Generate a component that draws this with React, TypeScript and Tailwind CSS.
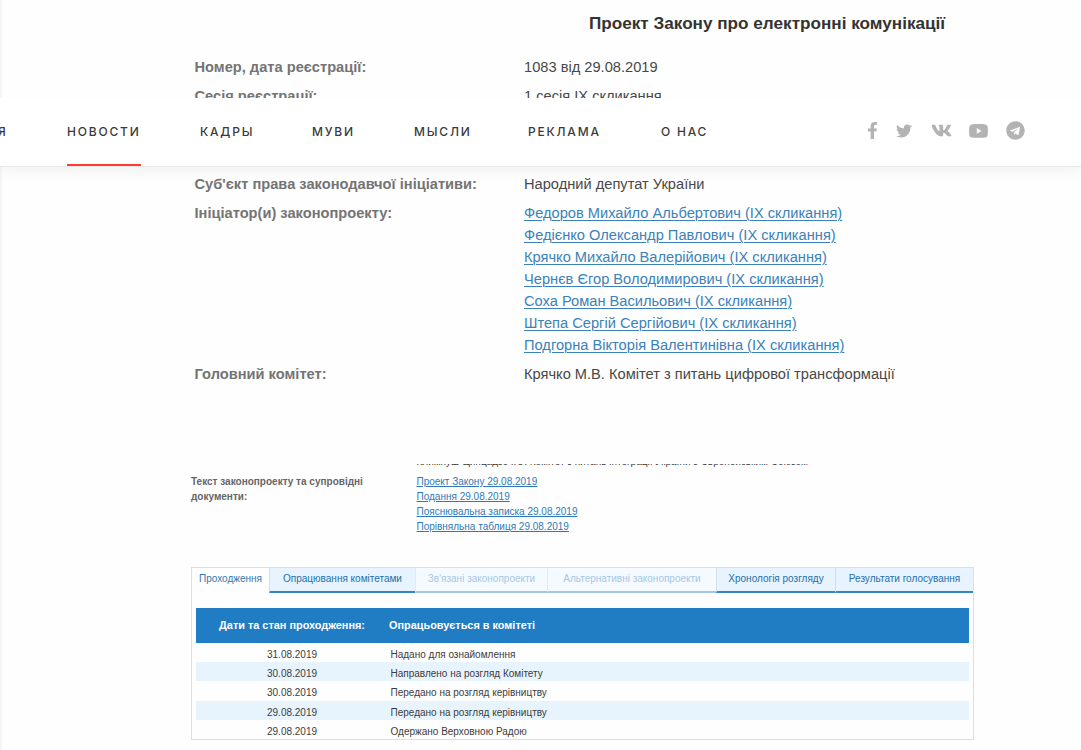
import { FaFacebookF, FaTelegram, FaTwitter, FaVk } from "react-icons/fa"
import { clsx } from "clsx"

const NAV_ITEMS: Array<{ label: string; width: string; active?: boolean }> = [
  { label: "НОВОСТИ", width: "w-[133px]", active: true },
  { label: "КАДРЫ", width: "w-[112px]" },
  { label: "МУВИ", width: "w-[102px]" },
  { label: "МЫСЛИ", width: "w-[114px]" },
  { label: "РЕКЛАМА", width: "w-[133px]" },
  { label: "О НАС", width: "w-[100px]" },
]

const DEPUTIES = [
  "Федоров Михайло Альбертович (IX скликання)",
  "Федієнко Олександр Павлович (IX скликання)",
  "Крячко Михайло Валерійович (IX скликання)",
  "Чернєв Єгор Володимирович (IX скликання)",
  "Соха Роман Васильович (IX скликання)",
  "Штепа Сергій Сергійович (IX скликання)",
  "Подгорна Вікторія Валентинівна (IX скликання)",
]

const DOCUMENTS = [
  "Проект Закону 29.08.2019",
  "Подання 29.08.2019",
  "Пояснювальна записка 29.08.2019",
  "Порівняльна таблиця 29.08.2019",
]

const TABS: Array<{ label: string; width: string; state: "active" | "normal" | "disabled" }> = [
  { label: "Проходження", width: "w-[77px]", state: "active" },
  { label: "Опрацювання комітетами", width: "w-[146px]", state: "normal" },
  { label: "Зв'язані законопроекти", width: "w-[132px]", state: "disabled" },
  { label: "Альтернативні законопроекти", width: "w-[169px]", state: "disabled" },
  { label: "Хронологія розгляду", width: "w-[119px]", state: "normal" },
  { label: "Результати голосування", width: "w-[138px]", state: "normal" },
]

const HISTORY = [
  { date: "31.08.2019", status: "Надано для ознайомлення", height: "h-[19px]" },
  { date: "30.08.2019", status: "Направлено на розгляд Комітету", height: "h-[19px]" },
  { date: "30.08.2019", status: "Передано на розгляд керівництву", height: "h-[20px]" },
  { date: "29.08.2019", status: "Передано на розгляд керівництву", height: "h-[19px]" },
  { date: "29.08.2019", status: "Одержано Верховною Радою", height: "h-[19px]" },
]

function Field({ label, children }: { label: string; children: React.ReactNode }) {
  return (
    <div className="flex">
      <div className="w-[329.5px] shrink-0 font-bold text-[#747474]">{label}</div>
      <div className="text-[#484848]">{children}</div>
    </div>
  )
}

function YoutubeIcon() {
  return (
    <svg className="w-[19px] h-[14px]" viewBox="0 0 19 14" fill="currentColor">
      <path
        fillRule="evenodd"
        d="M3 .4C6 0 13 0 16 .4C18 .7 18.5 1.6 18.7 3.4C19 6 19 8 18.7 10.4C18.5 12.3 18 13.1 16 13.4C13 13.8 6 13.8 3 13.4C1 13.1.5 12.3.3 10.4C0 8 0 6 .3 3.4C.5 1.6 1 .7 3 .4ZM7.8 4.1V9.7L12.6 6.9Z"
      />
    </svg>
  )
}

function Header() {
  return (
    <header className="relative z-10 flex h-[69px] bg-white border-b border-[#e9e9e9] shadow-[0_2px_14px_rgba(0,0,0,0.07)] [clip-path:inset(0_0_-20px_0)] font-['Inter',sans-serif] text-[12px] font-medium tracking-[1.8px] text-[#3a3a3a] whitespace-nowrap">
      <div className="w-[67px] leading-[67px] -indent-[2px]">Я</div>
      <nav className="flex">
        {NAV_ITEMS.map((item) => (
          <div key={item.label} className={clsx("flex", item.width)}>
            <a className={clsx("h-[68px] leading-[67px]", item.active && "border-b-2 border-[#ff3b30]")}>{item.label}</a>
          </div>
        ))}
      </nav>
      <div className="ml-[106px] flex h-[65px] items-center text-[#b3b3b3]">
        <FaFacebookF className="w-[11px] h-[17px]" />
        <FaTwitter className="ml-[18px] w-4 h-4" />
        <FaVk className="ml-[19px] w-[21px] h-[19px]" />
        <div className="ml-[17px]"><YoutubeIcon /></div>
        <FaTelegram className="ml-[18px] w-[19px] h-[19px]" />
      </div>
    </header>
  )
}

function Tabs() {
  return (
    <div className="flex h-[26px] text-[10px] leading-[22px] text-center border-t border-[#dcdfe2]">
      {TABS.map((tab) => (
        <div
          key={tab.label}
          className={clsx(
            "shrink-0",
            tab.width,
            tab.state === "active" && "text-[#3578ad]",
            tab.state === "normal" && "bg-[#e7f3fe] text-[#2470a8] border-b-2 border-b-[#3585c0] border-l border-l-[#d5dfe8]",
            tab.state === "disabled" && "bg-[#f5faff] text-[#a5c8e3] border-b-2 border-b-[#a3c7e2] border-l border-l-[#e4eaef]"
          )}
        >
          {tab.label}
        </div>
      ))}
    </div>
  )
}

export default function App() {
  return (
    <div className="w-[1081px] h-[750px] overflow-hidden bg-[#fefefe] font-['Liberation_Sans',Arial,sans-serif] whitespace-nowrap">
      {/* Bill card, upper part */}
      <section className="h-[98px] overflow-hidden border-l-2 border-[#f5f5f5] pl-[192.5px] pt-[12px] text-[14.65px] leading-[22px]">
        <h1 className="pl-[394.5px] text-[17.15px] font-bold text-[#333]">Проект Закону про електронні комунікації</h1>
        <div className="pt-[22px] space-y-[7px]">
          <Field label="Номер, дата реєстрації:">1083 від 29.08.2019</Field>
          <Field label="Сесія реєстрації:">1 сесія IX скликання</Field>
        </div>
      </section>

      <Header />

      {/* Bill card, lower part */}
      <section className="h-[297px] border-l-2 border-[#f5f5f5] pl-[192.5px] pt-[6px] text-[14.65px] leading-[22px] space-y-[7px]">
        <Field label="Суб'єкт права законодавчої ініціативи:">Народний депутат України</Field>
        <Field label="Ініціатор(и) законопроекту:">
          {DEPUTIES.map((name) => (
            <a key={name} className="block text-[#3b82b8] underline underline-offset-2 decoration-1">{name}</a>
          ))}
        </Field>
        <Field label="Головний комітет:">Крячко М.В. Комітет з питань цифрової трансформації</Field>
      </section>

      {/* Documents and progress */}
      <section className="h-[286px] border-l-2 border-[#f5f5f5] pl-[189px] text-[10px] leading-[15px]">
        <div className="flex h-[5px] items-end overflow-hidden pl-[225.5px] text-[#3c3c3c]">
          <span>Климпуш-Цинцадзе І.О. Комітет з питань інтеграції України з Європейським Союзом</span>
        </div>
        <div className="flex pt-[5px]">
          <div className="w-[225.5px] shrink-0 font-bold text-[#666]">
            Текст законопроекту та супровідні
            <br />
            документи:
          </div>
          <div>
            {DOCUMENTS.map((doc) => (
              <a key={doc} className="block text-[#2f7ab5] underline underline-offset-1 decoration-1">{doc}</a>
            ))}
          </div>
        </div>

        <div className="mt-[33px] w-[783px] h-[173px] border-x border-b border-[#dcdfe2]">
          <Tabs />
          <div className="mx-1 mt-[15px]">
            <div className="flex h-[35px] bg-[#207cc3] font-bold text-[10.9px] leading-[35px] text-white">
              <div className="w-[169px] text-right">Дати та стан проходження:</div>
              <div className="pl-6">Опрацьовується в комітеті</div>
            </div>
            {HISTORY.map((row, i) => (
              <div key={i} className={clsx("flex leading-[23px] text-[#3c3c3c]", row.height, i % 2 === 1 && "bg-[#e7f4fe]")}>
                <div className="w-[194.5px] pl-[71px]">{row.date}</div>
                <div>{row.status}</div>
              </div>
            ))}
          </div>
        </div>
      </section>
    </div>
  )
}
